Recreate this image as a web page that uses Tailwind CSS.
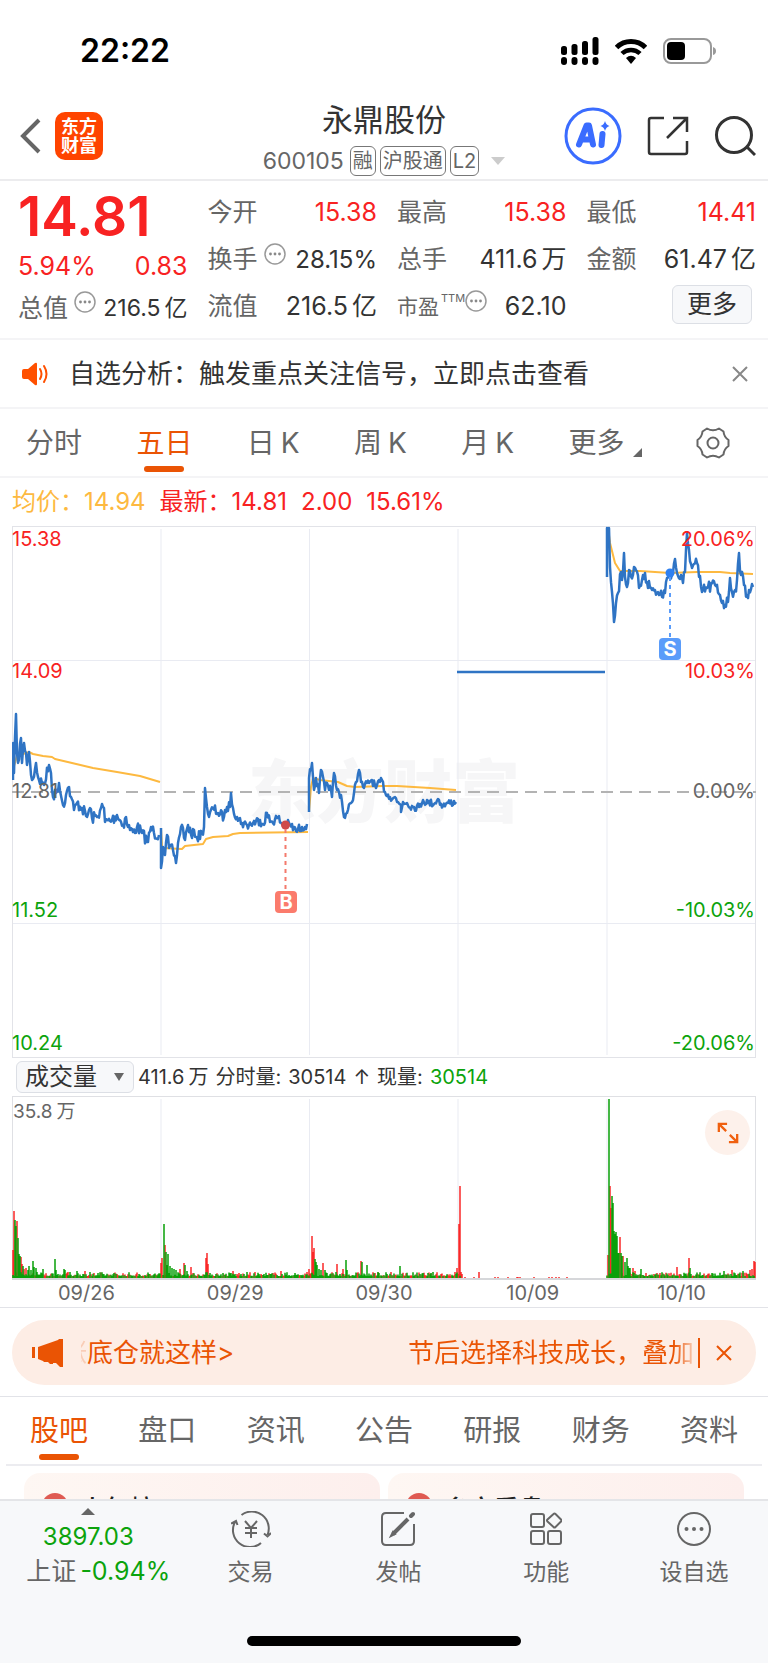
<!DOCTYPE html>
<html lang="zh-CN">
<head>
  <meta charset="UTF-8" />
  <meta name="viewport" content="width=device-width, initial-scale=1.0" />
  <title>永鼎股份 600105</title>
  <script src="https://cdn.jsdelivr.net/npm/@tailwindcss/browser@4"></script>
  <style>
    body { font-family: Inter, 'Noto Sans CJK SC', sans-serif; }
  </style>
</head>
<body class="bg-white text-[#333] font-normal">

  <!-- 状态栏 -->
  <div class="flex items-center justify-between h-[102px] pl-20 pr-[52px]">
    <span class="text-[32px] leading-none font-semibold text-black">22:22</span>
    <div class="flex items-center gap-4 text-black">
      <svg width="38" height="28" viewBox="0 0 38 28" fill="currentColor">
        <rect x="0" y="9" width="6" height="9" rx="2.5" /><rect x="10.500" y="7" width="6" height="11" rx="2.5" />
        <rect x="21" y="4" width="6" height="14" rx="2.5" /><rect x="31.500" y="0" width="6" height="18" rx="2.5" />
        <rect x="0" y="20" width="6" height="8" rx="3" /><rect x="10.500" y="20" width="6" height="8" rx="3" />
        <rect x="21" y="20" width="6" height="8" rx="3" /><rect x="31.500" y="20" width="6" height="8" rx="3" />
      </svg>
      <svg width="32" height="26" viewBox="0 0 32 26" fill="none" stroke="currentColor" stroke-width="5">
        <path d="M1.500 9.500a20.500 20.500 0 0 1 29 0" />
        <path d="M7 15.500a13 13 0 0 1 18 0" stroke-width="4.500" />
        <path d="M11 20q5-4.500 10 0l-5 6z" fill="currentColor" stroke="none" />
      </svg>
      <svg width="53" height="26" viewBox="0 0 53 26" fill="none">
        <rect x="1" y="1" width="47" height="24" rx="7" stroke="#999" stroke-width="2" />
        <rect x="4" y="4" width="18" height="18" rx="4" fill="currentColor" />
        <path d="M50 9q3 1 3 4t-3 4z" fill="#999" />
      </svg>
    </div>
  </div>

  <!-- 标题 -->
  <header class="grid grid-cols-[1fr_auto_1fr] items-center h-[79px] px-3 border-b-2 border-[#ececee]">
    <div class="flex items-center gap-3.5 pl-2 pb-2.5">
      <button aria-label="返回">
        <svg width="21" height="36" viewBox="0 0 21 36" fill="none" stroke="#666" stroke-width="4"><path d="M19 2 3 18l16 16" /></svg>
      </button>
      <div class="grid place-content-center size-12 rounded-[10px] bg-[#ff4400] text-white text-[18px] leading-[19px] font-bold text-center">
        <span>东方</span><span>财富</span>
      </div>
    </div>
    <div class="flex flex-col items-center">
      <h1 class="text-[31px] leading-[30px]">永鼎股份</h1>
      <div class="flex items-center gap-1 mt-2.5 text-[#666]">
        <span class="text-[23px] leading-8 mr-0.5">600105</span>
        <span class="border border-[#777] rounded-md px-0.5 text-[20px] leading-7">融</span>
        <span class="border border-[#777] rounded-md px-0.5 text-[20px] leading-7">沪股通</span>
        <span class="border border-[#777] rounded-md px-0.5 text-[20px] leading-7">L2</span>
        <svg class="ml-2" width="14" height="8" viewBox="0 0 14 8" fill="#ccc"><path d="M0 0h14L7 8z" /></svg>
      </div>
    </div>
    <div class="flex items-center justify-end gap-[25px] pb-2.5">
      <button aria-label="AI">
        <svg width="58" height="58" viewBox="0 0 58 58" fill="none">
          <circle cx="29" cy="29" r="27" stroke="#3a6cff" stroke-width="3" />
          <g stroke="#3a6cff" stroke-width="6" stroke-linejoin="round" stroke-linecap="round">
            <path d="M15 37.500 22.500 18.500h2.500L29 37.500M19 32.500h8" stroke-width="6" />
            <path d="M38.500 27 37.500 38" />
          </g>
          <path d="M41 14q1 4 4.500 5-3.500 1-4.500 5-1-4-4.500-5 3.500-1 4.500-5z" fill="#3a6cff" />
        </svg>
      </button>
      <button aria-label="分享">
        <svg width="42" height="42" viewBox="0 0 42 42" fill="none" stroke="#333" stroke-width="2.500">
          <path d="M17 3H4q-2 0-2 2v32q0 2 2 2h34q2 0 2-2V26" /><path d="M26 3h14v14M40 3 20 23" />
        </svg>
      </button>
      <button aria-label="搜索">
        <svg width="42" height="42" viewBox="0 0 42 42" fill="none" stroke="#333" stroke-width="3"><circle cx="20" cy="20" r="17.500" /><path d="m33 32 8 8" /></svg>
      </button>
    </div>
  </header>

  <!-- 报价 -->
  <section class="grid grid-cols-4 gap-x-5 h-[159px] pt-2 pb-2 pl-[18px] pr-3 border-b-2 border-[#f4f4f6] text-[25px] leading-none text-[#333]">
    <div class="flex flex-col">
      <div class="h-[54px] text-[55px] leading-[54px] font-semibold text-[#f82222]">14.81</div>
      <div class="flex items-center justify-between h-[46px] text-[#f82222]"><span>5.94%</span><span>0.83</span></div>
      <div class="flex items-center justify-between h-[38px]">
        <span class="flex items-center gap-1.5 text-[#666]">总值
          <svg class="mb-3" width="22" height="22" viewBox="0 0 22 22"><use href="#info" /></svg></span>
        <span class="text-[23px]">216.5<span class="ml-1">亿</span></span>
      </div>
    </div>
    <div class="grid grid-rows-3">
      <div class="flex items-center justify-between"><span class="text-[#666]">今开</span><span class="text-[#f82222]">15.38</span></div>
      <div class="flex items-center justify-between">
        <span class="flex items-center gap-1.5 text-[#666]">换手
          <svg class="mb-3" width="22" height="22" viewBox="0 0 22 22"><use href="#info" /></svg></span>
        <span class="text-[24px]">28.15%</span>
      </div>
      <div class="flex items-center justify-between"><span class="text-[#666]">流值</span><span>216.5<span class="ml-1">亿</span></span></div>
    </div>
    <div class="grid grid-rows-3">
      <div class="flex items-center justify-between"><span class="text-[#666]">最高</span><span class="text-[#f82222]">15.38</span></div>
      <div class="flex items-center justify-between"><span class="text-[#666]">总手</span><span>411.6<span class="ml-1">万</span></span></div>
      <div class="flex items-center justify-between">
        <span class="flex items-center text-[21px] text-[#666]">市盈<sup class="top-0 mb-4 ml-0.5 text-[11px] leading-none">TTM</sup>
          <svg class="mb-3" width="22" height="22" viewBox="0 0 22 22"><use href="#info" /></svg></span>
        <span>62.10</span>
      </div>
    </div>
    <div class="grid grid-rows-3">
      <div class="flex items-center justify-between"><span class="text-[#666]">最低</span><span class="text-[#f82222]">14.41</span></div>
      <div class="flex items-center justify-between"><span class="text-[#666]">金额</span><span>61.47<span class="ml-1">亿</span></span></div>
      <div class="flex items-center justify-end pr-1 pb-1">
        <button class="w-20 h-[39px] rounded-md border border-[#dcdfe5] bg-[#f7f8fa] leading-none">更多</button>
      </div>
    </div>
  </section>

  <!-- 提示 -->
  <div class="flex items-center h-[69px] pl-[22px] pr-5 border-b-2 border-[#f4f4f6]">
    <svg class="mr-5" width="27" height="24" viewBox="0 0 27 24" fill="none">
      <path d="M2 7h4l7-6q2-1 2 1v20q0 2-2 1l-7-6H2q-2 0-2-2V9q0-2 2-2z" fill="#ff5000" />
      <path d="M18 7q3 5 0 10M22 4q5 8 0 16" stroke="#ff5000" stroke-width="2" stroke-linecap="round" />
    </svg>
    <a href="#" class="flex-1 text-[26px] leading-none">自选分析：触发重点关注信号，立即点击查看</a>
    <button aria-label="关闭">
      <svg width="16" height="16" viewBox="0 0 16 16" stroke="#888" stroke-width="2"><path d="m1 1 14 14M15 1 1 15" /></svg>
    </button>
  </div>

  <!-- 周期切换 -->
  <nav class="flex items-center justify-between h-[69px] pl-[26px] pr-[38px] border-b-2 border-[#f4f4f6] text-[28px] leading-none text-[#666]">
    <button>分时</button>
    <button class="relative text-[#ea5404]">五日<i class="absolute left-1/2 -ml-5 -bottom-[15px] w-10 h-1.5 rounded-sm bg-[#ea5404]"></i></button>
    <button>日<span class="ml-1.5">K</span></button>
    <button>周<span class="ml-1.5">K</span></button>
    <button>月<span class="ml-1.5">K</span></button>
    <button class="flex items-end gap-2">更多<svg width="9" height="9" viewBox="0 0 9 9" fill="#666"><path d="M9 0v9H0z" /></svg></button>
    <button aria-label="设置">
      <svg width="34" height="32" viewBox="0 0 34 32" fill="none" stroke="#666" stroke-width="2">
        <path d="M11 1.500q6 3.500 12 0l4.500 3q.5 5.500 5 8.500v6q-4.500 3-5 8.500l-4.500 3q-6-3.500-12 0l-4.500-3q-.5-5.500-5-8.500v-6q4.500-3 5-8.500z" stroke-linejoin="round" />
        <circle cx="17" cy="16" r="5.500" />
      </svg>
    </button>
  </nav>

  <!-- 走势图 -->
  <main class="px-3">
    <div class="flex items-center gap-3.5 h-12 text-[24px] leading-none text-[#f82222]">
      <span class="text-[#fdb940]">均价：14.94</span>
      <span>最新：14.81</span><span>2.00</span><span>15.61%</span>
    </div>
    <svg class="block w-full" viewBox="0 0 744 532" fill="none" font-size="20">
      <text x="236" y="291" font-size="68" font-weight="900" fill="#f6f6f7">东方财富</text>
      <path d="M149 3v526M297.500 3v526M446 3v526M595 3v526M0 134.500h744M0 397.500h744" stroke="#e9ebf2" />
      <rect x=".5" y=".5" width="743" height="531" stroke="#e2e3e8" />
      <path d="M0 266h744" stroke="#b3b3b3" stroke-width="2" stroke-dasharray="12 7" />
      <g id="avg" stroke="#fdb940" stroke-width="2" stroke-linejoin="round"></g>
      <g id="price" stroke="#2f74c4" stroke-width="2.500" stroke-linejoin="round"></g>
      <g fill="#f82222">
        <text x="0" y="20">15.38</text><text x="0" y="152">14.09</text>
        <text x="743" y="20" text-anchor="end">20.06%</text><text x="743" y="152" text-anchor="end">10.03%</text>
      </g>
      <g fill="#666"><text x="0" y="272">12.81</text><text x="743" y="272" text-anchor="end">0.00%</text></g>
      <g fill="#0ca30c">
        <text x="0" y="391">11.52</text><text x="0" y="524">10.24</text>
        <text x="743" y="391" text-anchor="end">-10.03%</text><text x="743" y="524" text-anchor="end">-20.06%</text>
      </g>
      <!-- 买卖点 -->
      <circle cx="273.500" cy="299" r="4.500" fill="#cf4a4a" />
      <path d="M273.500 303v62" stroke="#f47a6c" stroke-width="2" stroke-dasharray="4 4" />
      <rect x="263" y="365" width="22" height="22" rx="4" fill="#fb7b6c" />
      <text x="274" y="383" text-anchor="middle" font-size="20" font-weight="700" fill="#fff">B</text>
      <circle cx="658" cy="47" r="4.500" fill="#2f80f0" />
      <path d="M658 51v61" stroke="#5a9cfa" stroke-width="2" stroke-dasharray="4 4" />
      <rect x="647" y="112" width="22" height="22" rx="4" fill="#5a9cfa" />
      <text x="658" y="130" text-anchor="middle" font-size="20" font-weight="700" fill="#fff">S</text>
    </svg>

    <div class="flex items-center h-[38px] px-1 text-[20px] leading-none">
      <label for="indicator" class="sr-only">指标</label>
      <div class="relative mr-1">
        <select id="indicator" class="appearance-none w-[118px] h-8 pl-2 rounded-md border border-[#dcdfe5] bg-[#f7f8fa] text-[24px] leading-7">
          <option>成交量</option>
        </select>
        <svg class="absolute right-2.5 top-3 pointer-events-none" width="10" height="8" viewBox="0 0 10 8" fill="#666"><path d="M0 0h10L5 8z" /></svg>
      </div>
      <span class="flex gap-[7px] whitespace-nowrap leading-7">
        <span>411.6<span class="ml-1">万</span></span><span>分时量:</span><span>30514</span><span>↑</span><span>现量:</span><span class="text-[#0ca30c]">30514</span>
      </span>
    </div>

    <div class="relative">
      <svg class="block w-full" viewBox="0 0 744 184" fill="none">
        <path d="M149 3v180M297.500 3v180M446 3v180M595 3v180" stroke="#e9ebf2" />
        <rect x=".5" y=".5" width="743" height="183" stroke="#dfe0e4" />
        <path d="M0 183h744" stroke="#d6d7da" stroke-width="2" />
        <text x="1" y="22" font-size="19" fill="#666">35.8<tspan dx="4">万</tspan></text>
        <path id="vol-up" stroke="#fa2828" stroke-width="1.500" />
        <path id="vol-down" stroke="#09a009" stroke-width="1.500" />
      </svg>
      <button aria-label="全屏" class="absolute right-1.5 top-3.5 grid place-items-center size-[45px] rounded-full bg-[#fdf1eb]">
        <svg width="22" height="22" viewBox="0 0 24 24" fill="none" stroke="#f0600f" stroke-width="2.500"><path d="M2 11V2h9M2 2l8 8M22 13v9h-9M22 22l-8-8" /></svg>
      </button>
    </div>
    <div class="grid grid-cols-5 text-center text-[20px] leading-[27px] text-[#666]">
      <span>09/26</span><span>09/29</span><span>09/30</span><span>10/09</span><span>10/10</span>
    </div>
  </main>

  <!-- 公告条 -->
  <div class="px-3 pt-3 pb-[11px] border-y border-[#e2e3e8]">
    <div class="flex items-center h-[65px] pl-5 pr-6 rounded-full bg-[#fdede5] text-[26px] leading-8 text-[#ea5404]">
      <svg class="mr-[18px] shrink-0" width="31" height="28" viewBox="0 0 31 28" fill="#ea5404">
        <path d="M0 8h3v11H0zM6 8 26 1l1-1h4v28h-3l-4-4h-3v1h-3l-2-2h-4l-1-1-5-2z" />
      </svg>
      <div class="flex flex-1 justify-between whitespace-nowrap">
        <span class="flex"><span class="flex justify-end w-1.5 overflow-hidden opacity-20">涨</span>底仓就这样&gt;</span>
        <span class="bg-linear-to-r from-[#ea5404] from-93% to-[#ea5404]/20 bg-clip-text text-transparent">节后选择科技成长，叠加</span>
      </div>
      <i class="w-0.5 h-[30px] ml-1 mr-4 bg-[#ea5404]"></i>
      <button aria-label="关闭">
        <svg width="16" height="16" viewBox="0 0 16 16" stroke="#ea5404" stroke-width="2"><path d="m1 1 14 14M15 1 1 15" /></svg>
      </button>
    </div>
  </div>

  <nav class="flex items-center justify-between h-[69px] mx-1.5 px-6 border-b-2 border-[#ececf0] text-[29px] leading-none text-[#666]">
    <a href="#" class="relative text-[#ea5404]">股吧<i class="absolute left-1/2 -ml-5 -bottom-[15px] w-10 h-1.5 rounded-sm bg-[#ea5404]"></i></a>
    <a href="#">盘口</a>
    <a href="#">资讯</a>
    <a href="#">公告</a>
    <a href="#">研报</a>
    <a href="#">财务</a>
    <a href="#">资料</a>
  </nav>
  <div class="grid grid-cols-2 gap-2 h-[33px] pt-[7px] px-6 overflow-hidden text-[25px] leading-[25px] font-medium text-[#222]">
    <a href="#" class="flex items-start h-24 pt-5 pl-[18px] gap-3 rounded-2xl bg-linear-to-r from-[#fef7f3] to-[#fdefed]"><i class="size-[26px] rounded-full bg-[#df5a52]"></i><span class="pt-1">人气榜</span></a>
    <a href="#" class="flex items-start h-24 pt-5 pl-[18px] gap-3 rounded-2xl bg-linear-to-r from-[#fef7f3] to-[#fdefed]"><i class="size-[26px] rounded-full bg-[#df5a52]"></i><span class="pt-1">多空看盘</span></a>
  </div>

  <!-- 底部栏 -->
  <footer class="h-[165px] border-t-2 border-[#e4e5e8] bg-[#f7f8fa] text-[#666]">
    <div class="flex text-[23px] leading-none text-center">
      <button class="flex flex-col items-center w-[23%] pt-[7px] text-[25px]">
        <svg width="14" height="7" viewBox="0 0 14 7" fill="#666"><path d="M0 7h14L7 0z" /></svg>
        <span class="mt-2.5 text-[24px] leading-6 text-[#0ca30c]">3897.03</span>
        <span class="mt-2.5 pl-5 whitespace-nowrap">上证<span class="ml-1 text-[#0ca30c]">-0.94%</span></span>
      </button>
      <button class="flex flex-col items-center flex-1 gap-3.5 pt-2.5">
        <svg width="40" height="36" viewBox="0 0 40 36" fill="none" stroke="#666" stroke-width="2">
          <path d="M10.500 4A17 17 0 0 1 36.500 24M33 22.500l3.500 3 3.500-3.500M30 32A17 17 0 0 1 4 11M0 12.500l5-2.500 1.500 4" />
          <path d="m14 10 6 7 6-7M20 17v10M14 17h12M14 22h12" />
        </svg>交易
      </button>
      <button class="flex flex-col items-center flex-1 gap-3.5 pt-2.5">
        <svg width="34" height="36" viewBox="0 0 34 36" fill="none" stroke="#666" stroke-width="2">
          <path d="M23 2H5Q1 2 1 6v24q0 4 4 4h24q4 0 4-4V13" /><path d="m12 23 15-15" stroke-width="4" /><path d="m30 5 2-2" stroke-width="4" stroke-linecap="round" /><path d="m10 25 2-4 2 2z" fill="#666" />
        </svg>发帖
      </button>
      <button class="flex flex-col items-center flex-1 gap-3.5 pt-2.5">
        <svg width="32" height="36" viewBox="0 0 32 36" fill="none" stroke="#666" stroke-width="2">
          <rect x="1" y="3" width="13" height="13" rx="2" /><rect x="1" y="20" width="13" height="13" rx="2" /><rect x="18" y="20" width="13" height="13" rx="2" />
          <path d="M23.500 3q1-1 2 0L31 8.500q1 1 0 2L25.500 16q-1 1-2 0L17.500 10.500q-1-1 0-2z" />
        </svg>功能
      </button>
      <button class="flex flex-col items-center flex-1 gap-3.5 pt-2.5">
        <svg width="36" height="36" viewBox="0 0 36 36" fill="#666">
          <circle cx="18" cy="18" r="16" fill="none" stroke="#666" stroke-width="2" /><circle cx="10.500" cy="18" r="2" /><circle cx="18" cy="18" r="2" /><circle cx="25.500" cy="18" r="2" />
        </svg>设自选
      </button>
    </div>
    <div class="w-[274px] h-2.5 mt-[52px] mx-auto rounded-full bg-black"></div>
  </footer>

  <svg width="0" height="0" class="absolute">
    <symbol id="info" viewBox="0 0 22 22">
      <circle cx="11" cy="11" r="10" fill="none" stroke="#999" stroke-width="1.500" />
      <g fill="#888"><circle cx="6.500" cy="11" r="1.400" /><circle cx="11" cy="11" r="1.400" /><circle cx="15.500" cy="11" r="1.400" /></g>
    </symbol>
  </svg>

  <script>
    // 分时价格，每天一组 [x, y]
    const price = [
      [[1,254],[1,217],[2,247],[4,188],[5,227],[6,237],[9,212],[10,237],[12,217],[14,227],[15,239],[17,226],[19,249],[21,253],[24,237],[26,251],[30,257],[32,259],[37,239],[39,247],[41,271],[44,267],[47,257],[51,279],[54,269],[57,261],[59,271],[62,284],[65,277],[70,282],[75,291],[78,282],[80,292],[85,291],[89,282],[92,282],[93,296],[100,294],[105,289],[111,299],[114,291],[116,301],[121,306],[125,301],[130,307],[136,316],[139,301],[142,307],[147,309]],
      [[149,302],[149,342],[151,321],[153,329],[155,309],[157,322],[161,324],[164,337],[166,317],[169,301],[171,302],[173,314],[176,299],[180,312],[182,304],[185,312],[190,307],[192,301],[193,262],[195,281],[197,291],[201,282],[206,287],[212,291],[215,281],[218,281],[219,267],[221,282],[225,291],[230,297],[235,299],[241,297],[248,294],[251,298],[255,287],[258,296],[266,292],[270,298],[278,299],[284,305],[290,301],[295,298]],
      [[297,286],[297,252],[300,237],[302,264],[304,252],[307,267],[309,244],[313,264],[315,257],[319,264],[320,271],[322,247],[325,264],[329,269],[332,291],[335,287],[339,277],[342,267],[344,256],[347,244],[349,256],[352,262],[355,257],[360,254],[364,262],[370,254],[373,266],[378,271],[383,271],[385,276],[389,279],[389,286],[391,276],[395,277],[401,281],[407,281],[411,274],[416,277],[423,277],[426,273],[431,280],[436,277],[444,276]],
      [[445,146],[593,146]],
      [[595,51],[595,2],[597,2],[598,41],[600,66],[602,96],[604,77],[606,67],[609,46],[610,54],[612,27],[613,51],[615,61],[617,44],[621,49],[624,44],[627,62],[631,49],[633,47],[635,56],[640,64],[643,64],[647,69],[653,67],[655,52],[658,46],[661,47],[663,33],[665,47],[671,57],[673,46],[675,7],[677,24],[680,42],[685,37],[687,51],[690,66],[695,62],[703,59],[708,69],[713,79],[716,76],[718,52],[720,66],[723,64],[725,54],[727,27],[729,49],[732,59],[735,69],[737,64],[741,61]]
    ];
    const noise = [6, 5, 4, 0, 7];
    const avg = [
      [[2,240],[5,230],[17,226],[21,228],[31,230],[40,231],[43,233],[60,237],[81,242],[105,246],[128,250],[148,256]],
      [[149,303],[150,320],[151,322],[170,323],[173,320],[191,318],[194,313],[201,311],[216,310],[221,308],[228,307],[296,306]],
      [[297,286],[299,261],[301,252],[308,254],[326,256],[335,260],[343,261],[371,260],[385,260],[418,262],[444,264]],
      [[596,2],[598,17],[603,37],[608,45],[628,45],[658,47],[685,46],[708,46],[718,47],[741,48]]
    ];
    // 成交量关键点 [x, 高度]，其余为底量
    const spikes = [
      [0,28,1],[1,67,1],[2,58],[3,52],[4,57,1],[5,40],[6,24],[7,22],[8,21,1],[9,14,1],[10,12],[11,9,1],[13,10,1],[15,8],[16,12],[18,8],[20,17],[21,11],[23,10],[24,6],[30,9],[42,19],[43,8],[51,9],[52,8],[55,6,1],[64,7],[72,7,1],[77,6],[148,15,1],[149,20,1],
      [151,54],[152,33,1],[153,26],[155,24],[154,13],[157,12],[159,10],[161,9],[163,8],[167,9,1],[171,15,1],[172,13],[174,7],[178,11,1],[193,20,1],[194,25,1],[195,14,1],[197,5],[220,7,1],[268,7,1],[294,6,1],[296,9,1],
      [299,42,1],[300,26,1],[301,30,1],[302,19],[303,16],[304,13],[306,9],[308,8],[310,15,1],[312,8],[324,14,1],[330,9,1],[333,18],[334,8],[348,17,1],[349,16],[354,13],[365,6],[387,12],[418,5],[442,6,1],[444,10,1],
      [446,54,1],[447,92,1],[448,6,1],[449,4,1],[466,6,1],
      [595,23,1],[596,179],[597,92,1],[598,70,1],[599,82],[600,75],[601,47],[602,44],[603,46],[604,42],[605,25],[606,25],[607,41,1],[608,25],[609,22],[610,22,1],[612,16],[614,20],[615,12],[616,10],[617,10],[620,10,1],[622,7,1],[628,9],[664,11,1],[676,20,1],[677,10],[711,7],[719,8,1],[730,7],[737,8,1],[739,9,1],[741,17,1],[742,16,1]
    ];

    let seed = 7;
    function rnd() {
      seed = (seed * 16807) % 2147483647;
      return seed / 2147483647;
    }

    function addLine(id, pts) {
      const el = document.createElementNS('http://www.w3.org/2000/svg', 'polyline');
      el.setAttribute('points', pts.map(p => p.join(',')).join(' '));
      document.getElementById(id).appendChild(el);
    }

    avg.forEach(day => addLine('avg', day));
    price.forEach((day, d) => {
      const pts = [day[0]];
      for (let i = 1; i < day.length; i++) {
        const [x0, y0] = day[i - 1];
        const [x1, y1] = day[i];
        for (let x = x0 + 1; x < x1; x++) {
          pts.push([x, y0 + (y1 - y0) * (x - x0) / (x1 - x0) + (rnd() * 2 - 1) * noise[d]]);
        }
        pts.push(day[i]);
      }
      addLine('price', pts);
    });

    const bars = { up: '', down: '' };
    for (let x = 1; x < 743; x++) {
      const quiet = x > 449 && x < 595;
      if (quiet && rnd() > 0.15) continue;
      const r = rnd();
      const h = quiet ? 1 : 2 + r * r * 4;
      bars[quiet || rnd() < 0.35 ? 'up' : 'down'] += `M${x} 182v-${h.toFixed(1)}`;
    }
    spikes.forEach(([x, h, up]) => { bars[up ? 'up' : 'down'] += `M${x + 1} 182v-${h}`; });
    document.getElementById('vol-up').setAttribute('d', bars.up);
    document.getElementById('vol-down').setAttribute('d', bars.down);
  </script>
</body>
</html>
